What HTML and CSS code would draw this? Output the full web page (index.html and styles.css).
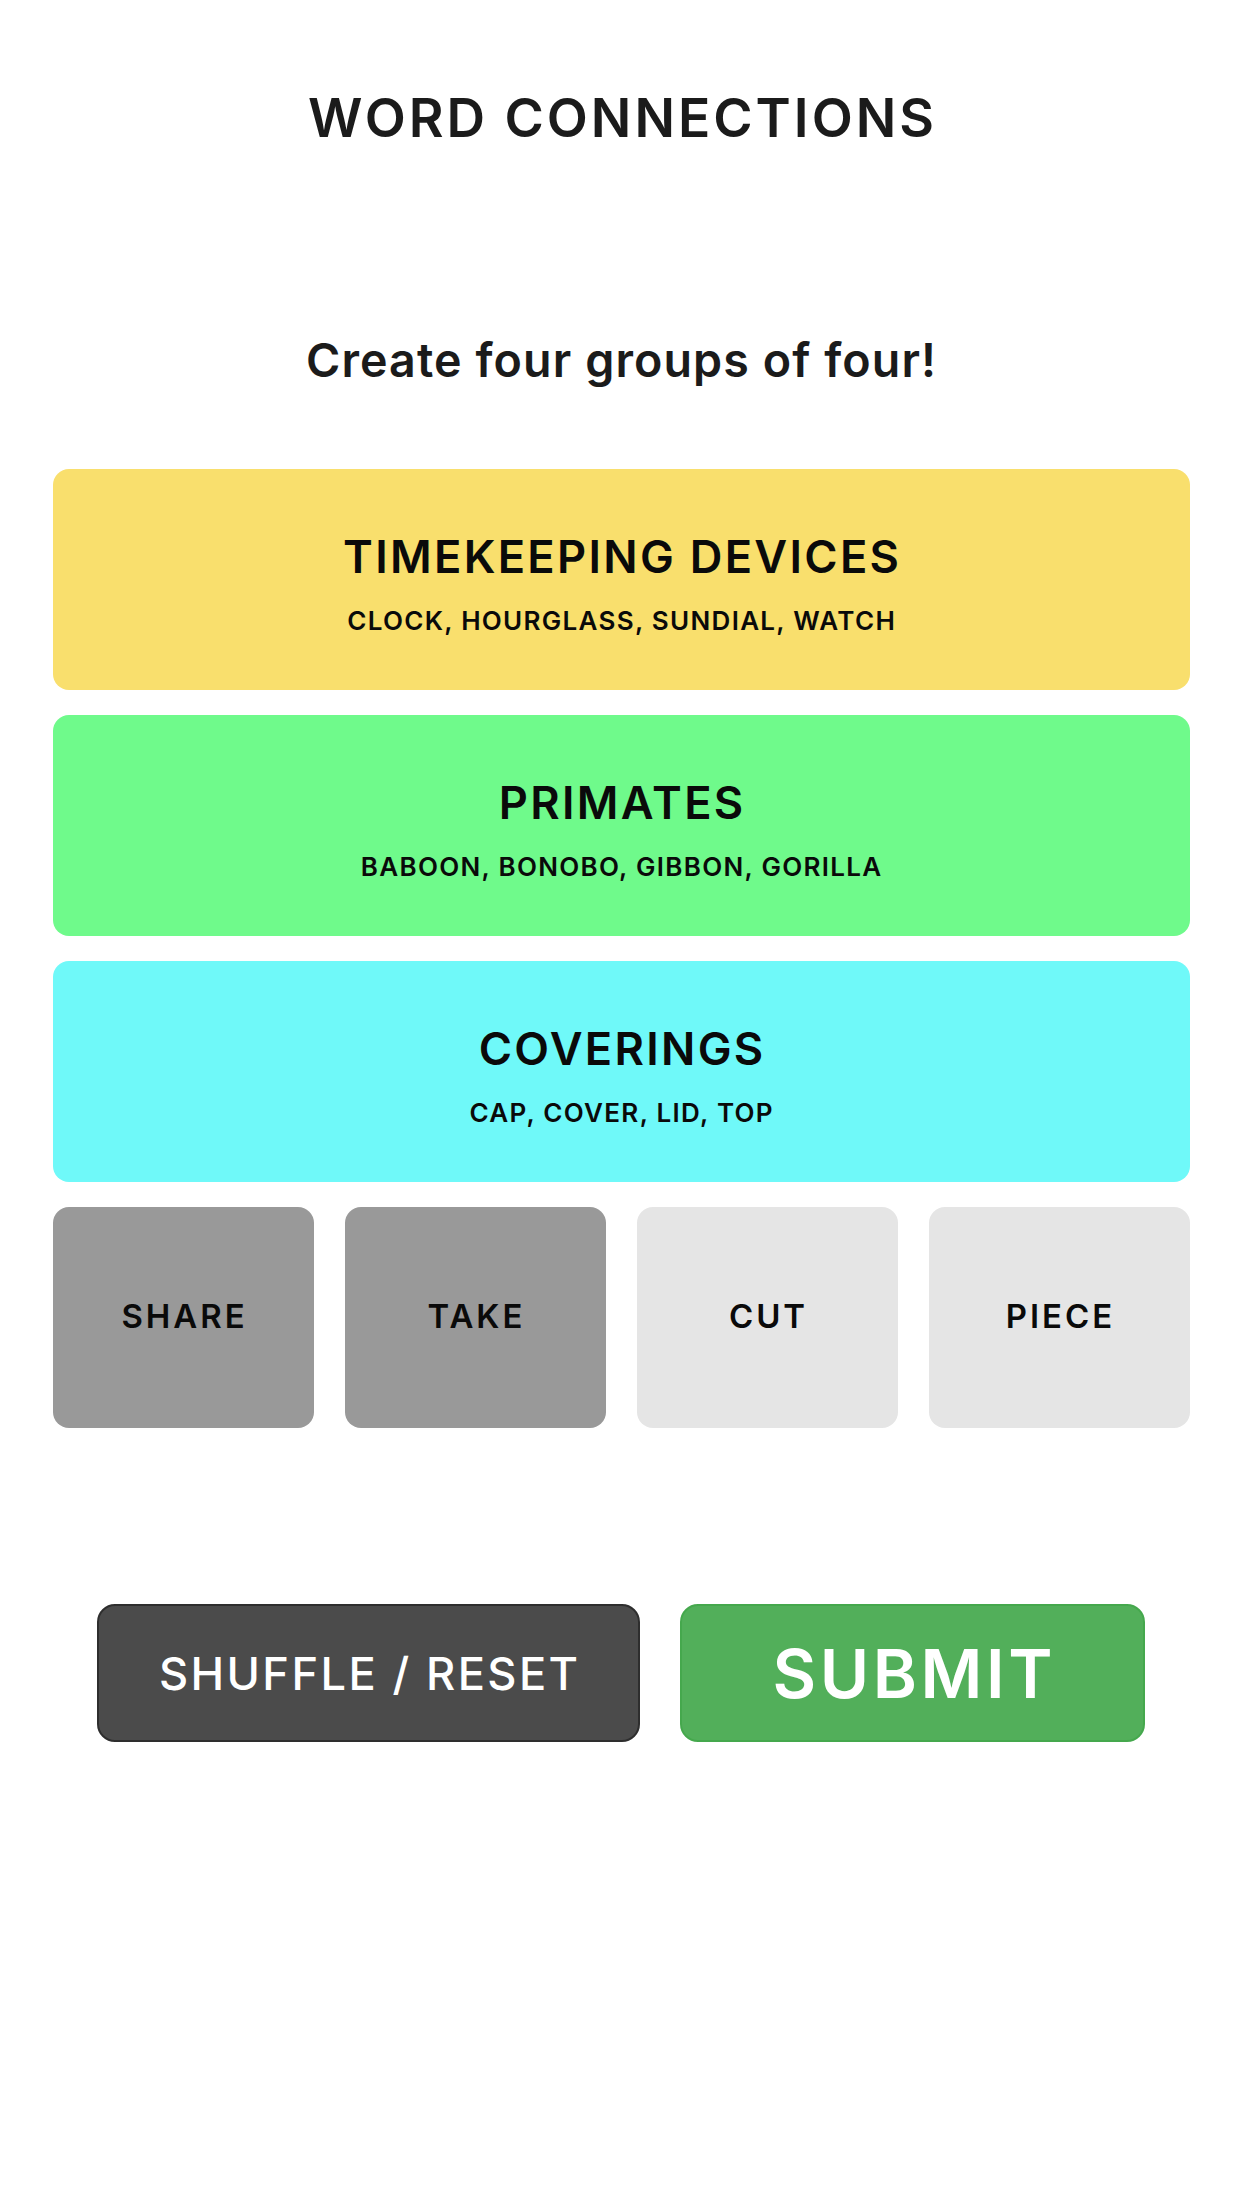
FILE: index.html
```html
<!DOCTYPE html>
<html lang="en">
<head>
<meta charset="utf-8">
<title>Word Connections</title>
<link rel="stylesheet" href="styles.css">
</head>
<body>
<main class="page">
  <h1 class="title">WORD CONNECTIONS</h1>
  <p class="subtitle">Create four groups of four!</p>

  <section class="board">
    <div class="group group-yellow">
      <div class="group-name">TIMEKEEPING DEVICES</div>
      <div class="group-words">CLOCK, HOURGLASS, SUNDIAL, WATCH</div>
    </div>
    <div class="group group-green">
      <div class="group-name">PRIMATES</div>
      <div class="group-words">BABOON, BONOBO, GIBBON, GORILLA</div>
    </div>
    <div class="group group-cyan">
      <div class="group-name">COVERINGS</div>
      <div class="group-words">CAP, COVER, LID, TOP</div>
    </div>
    <div class="tiles">
      <div class="tile tile-selected">SHARE</div>
      <div class="tile tile-selected">TAKE</div>
      <div class="tile">CUT</div>
      <div class="tile">PIECE</div>
    </div>
  </section>

  <div class="actions">
    <button class="btn btn-shuffle">SHUFFLE / RESET</button>
    <button class="btn btn-submit">SUBMIT</button>
  </div>
</main>
</body>
</html>
```
FILE: styles.css
```css
* { box-sizing: border-box; }

html, body {
  margin: 0;
  padding: 0;
  background: #ffffff;
}

body {
  font-family: Inter, "Noto Sans", "DejaVu Sans", sans-serif;
  font-weight: 600;
  color: #1b1b1b;
}

.page {
  width: 1242px;
  min-height: 2208px;
  padding-top: 88px;
}

.title {
  margin: 0;
  font-size: 53.4px;
  font-weight: 600;
  line-height: 59px;
  letter-spacing: 3px;
  text-indent: 3px;
  text-align: center;
  color: #1b1b1b;
}

.subtitle {
  margin: 185px 0 0;
  font-size: 46.6px;
  line-height: 56px;
  letter-spacing: 1.1px;
  text-indent: 1.1px;
  text-align: center;
  color: #1b1b1b;
}

.board {
  width: 1137px;
  margin: 81px auto 0;
  display: flex;
  flex-direction: column;
  gap: 25px;
}

.group {
  height: 221px;
  border-radius: 16px;
  padding-top: 64px;
  display: flex;
  flex-direction: column;
  align-items: center;
  color: #0a0a0a;
}

.group-yellow { background: #f9df6d; }
.group-green  { background: #6ffa8b; }
.group-cyan   { background: #6ff9f9; }

.group-name {
  font-size: 45.2px;
  line-height: 47px;
  letter-spacing: 2.3px;
  text-indent: 2.3px;
}

.group-words {
  margin-top: 28px;
  font-size: 26px;
  line-height: 26px;
  letter-spacing: 1.3px;
  text-indent: 1.3px;
}

.tiles {
  display: grid;
  grid-template-columns: repeat(4, 1fr);
  gap: 31px;
}

.tile {
  height: 221px;
  border-radius: 16px;
  background: #e5e5e5;
  display: flex;
  align-items: center;
  justify-content: center;
  padding-bottom: 3px;
  font-size: 32.9px;
  line-height: 40px;
  letter-spacing: 3px;
  text-indent: 3px;
  color: #0a0a0a;
}

.tile-selected { background: #999999; }

.actions {
  margin-top: 176px;
  display: flex;
  justify-content: center;
  gap: 40px;
}

.btn {
  height: 138px;
  border-radius: 18px;
  font-family: Inter, "Noto Sans", "DejaVu Sans", sans-serif;
  font-weight: 600;
  color: #ffffff;
  display: flex;
  align-items: center;
  justify-content: center;
  padding: 0;
  cursor: pointer;
}

.btn-shuffle {
  width: 543px;
  background: #4b4b4b;
  border: 2px solid #2e2e2e;
  font-size: 45.2px;
  font-weight: 500;
  letter-spacing: 2.4px;
  text-indent: 2.4px;
}

.btn-submit {
  width: 465px;
  background: #52af5a;
  border: 2px solid #45a84d;
  font-size: 67.1px;
  letter-spacing: 3.6px;
  text-indent: 3.6px;
}
```
